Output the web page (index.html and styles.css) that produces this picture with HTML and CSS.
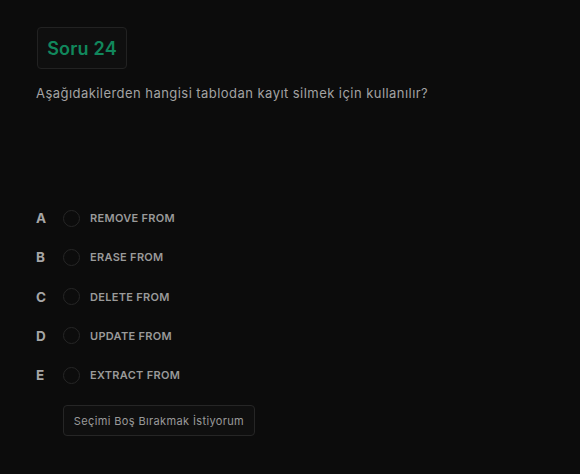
FILE: index.html
```html
<!DOCTYPE html>
<html lang="tr">
<head>
<meta charset="utf-8">
<link rel="stylesheet" href="styles.css">
</head>
<body>
<main class="quiz">
  <div class="qbadge">Soru 24</div>
  <p class="question">Aşağıdakilerden hangisi tablodan kayıt silmek için kullanılır?</p>
  <ul class="options">
    <li class="option"><span class="letter">A</span><span class="radio"></span><span class="label">REMOVE FROM</span></li>
    <li class="option"><span class="letter">B</span><span class="radio"></span><span class="label">ERASE FROM</span></li>
    <li class="option"><span class="letter">C</span><span class="radio"></span><span class="label">DELETE FROM</span></li>
    <li class="option"><span class="letter">D</span><span class="radio"></span><span class="label">UPDATE FROM</span></li>
    <li class="option"><span class="letter">E</span><span class="radio"></span><span class="label">EXTRACT FROM</span></li>
  </ul>
  <button class="skip">Seçimi Boş Bırakmak İstiyorum</button>
</main>
</body>
</html>
```
FILE: styles.css
```css
* { box-sizing: border-box; }
html, body { margin: 0; padding: 0; background: #0c0c0c; height: 100%; }
body { font-family: Inter, "Noto Sans", sans-serif; }
.quiz { padding: 27px 36px 0 36px; display: flex; flex-direction: column; align-items: flex-start; }
.qbadge {
  margin-left: 1px;
  width: 90px; height: 42px;
  border: 1px solid #222;
  border-radius: 4px;
  background: #0f0f0f;
  color: #11875c;
  font-size: 18px; font-weight: 600;
  letter-spacing: 0.2px;
  display: flex; align-items: center; justify-content: center;
}
.question { margin: 16px 0 0 0; color: #a3a3a3; font-size: 13px; letter-spacing: 0.45px; line-height: 16px; }
.options { list-style: none; margin: 109px 0 0 0; padding: 0; display: flex; flex-direction: column; gap: 23.3px; }
.option { display: flex; align-items: center; height: 16px; }
.letter { width: 27px; color: #a6a6a6; font-size: 13.5px; font-weight: 700; }
.radio { width: 17px; height: 17px; border-radius: 50%; border: 1px solid #262626; margin-right: 10px; }
.label { color: #9a9a9a; font-size: 11px; font-weight: 600; letter-spacing: 0.3px; }
.skip {
  margin: 22px 0 0 27px;
  width: 192px; height: 31px;
  background: #0f0f0f;
  border: 1px solid #262626; border-radius: 4px;
  color: #9a9a9a; font-family: inherit; font-size: 11px;
  letter-spacing: 0.37px;
  padding: 0;
}
```
